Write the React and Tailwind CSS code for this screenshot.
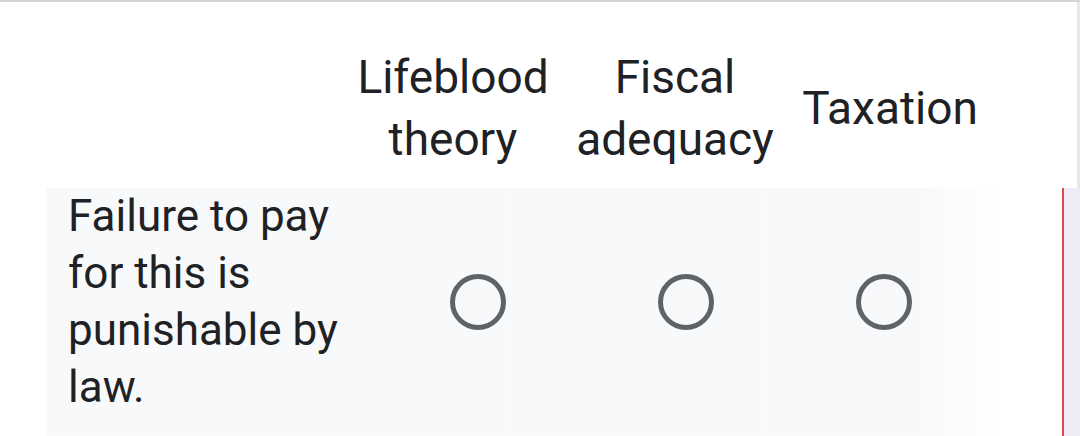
export default function App() {
  const cols = ["Lifeblood theory", "Fiscal adequacy", "Taxation"];

  return (
    <div className="h-[436px] w-[1080px] overflow-hidden bg-white font-['Roboto','Liberation_Sans',sans-serif] text-[#202124]">
      {/* top edge */}
      <div className="h-[2px] bg-[#d5d5d5]" />

      {/* column header */}
      <div className="flex h-[186px] items-center border-r-[3px] border-[#e8e8e8] pt-[25px] text-[46px] leading-[62px]">
        <div className="w-[343px] shrink-0" />
        <div className="w-[220px] shrink-0 text-center">{cols[0]}</div>
        <div className="w-[224px] shrink-0 text-center">{cols[1]}</div>
        <div className="w-[206px] shrink-0 text-center">{cols[2]}</div>
      </div>

      {/* grid row */}
      <div className="flex h-[248px]">
        <div className="w-[46px] shrink-0" />
        <div className="flex w-[1016px] shrink-0 items-start bg-linear-to-r from-[#f8f9fa] from-86% to-white to-94%">
          <div className="w-[300px] shrink-0 pl-[22px] text-[44px] leading-[57px]">
            Failure to pay for this is punishable by law.
          </div>
          <div className="flex h-[228px] items-center">
            <span className="ml-[104px] h-[56px] w-[56px] rounded-full border-[5px] border-[#5f6368]" />
            <span className="ml-[152px] h-[56px] w-[56px] rounded-full border-[5px] border-[#5f6368]" />
            <span className="ml-[142px] h-[56px] w-[56px] rounded-full border-[5px] border-[#5f6368]" />
          </div>
        </div>
        <div className="w-[2px] shrink-0 bg-[#dc4a4a]" />
        <div className="flex-1 bg-[#eeeaf6]" />
      </div>
    </div>
  );
}
